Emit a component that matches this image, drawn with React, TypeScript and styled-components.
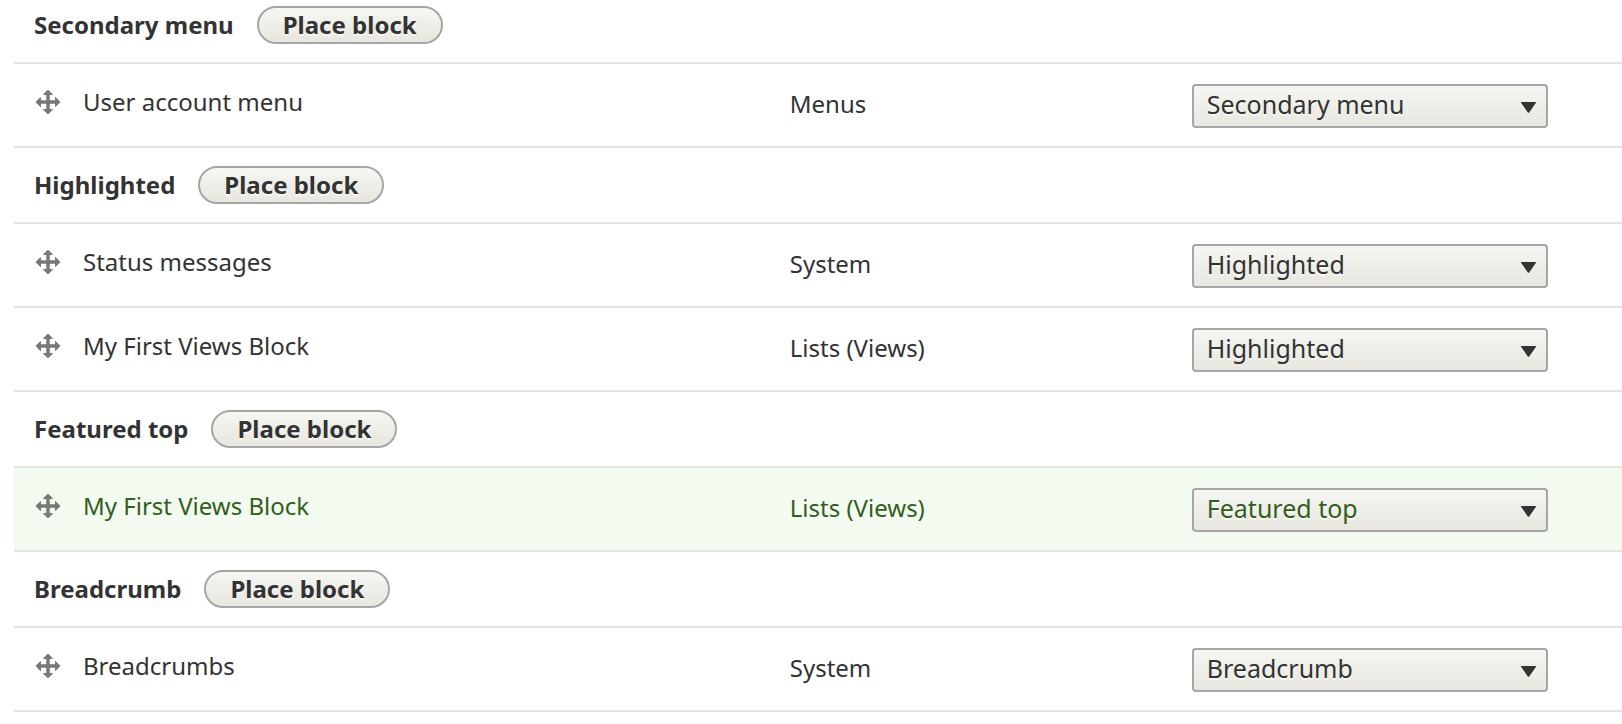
import React, { useState } from 'react';
import styled, { createGlobalStyle } from 'styled-components';

const GlobalStyle = createGlobalStyle`
  *, *::before, *::after {
    box-sizing: border-box;
  }
  body {
    margin: 0;
    background: #fff;
    color: #333;
    font-family: 'Lucida Grande', 'Lucida Sans Unicode', 'Noto Sans', 'DejaVu Sans', sans-serif;
    font-size: 24px;
    line-height: 32px;
  }
`;

const Page = styled.main`
  padding-left: 14px;
  overflow-x: hidden;
`;

const BlockTable = styled.table`
  width: 100%;
  border-collapse: separate;
  border-spacing: 0;
  table-layout: fixed;
`;

const Column = styled.col<{ $width?: string }>`
  width: ${({ $width }) => $width ?? 'auto'};
`;

const RegionCell = styled.th`
  padding: 18px 20px;
  border-bottom: 2px solid #e6e4df;
  text-align: left;
  font-weight: 700;

  tbody:first-of-type > tr > & {
    padding-top: 6px;
  }
`;

const RegionHeading = styled.div`
  display: flex;
  align-items: center;
  gap: 23px;
`;

const PlaceButton = styled.button`
  height: 38px;
  padding: 0 24px;
  border: 2px solid #a6a6a6;
  border-radius: 19px;
  background: linear-gradient(to bottom, #f6f6f3, #e7e7df);
  color: #333;
  font: inherit;
  line-height: 32px;
  text-shadow: 0 2px rgba(255, 255, 255, 0.6);
  cursor: pointer;
`;

const BlockRow = styled.tr<{ $placed?: boolean }>`
  background: ${({ $placed }) => ($placed ? '#f3faef' : 'transparent')};
  color: ${({ $placed }) => ($placed ? '#325e1c' : '#333')};
`;

const BlockCell = styled.td`
  padding: 20px 20px 18px;
  border-bottom: 2px solid #e6e4df;
  vertical-align: middle;
`;

const BlockName = styled.div`
  display: flex;
  align-items: center;
  gap: 21px;
  padding-bottom: 8px;
`;

const Category = styled.div`
  padding-bottom: 4px;
`;

const DragHandle = styled.a`
  display: block;
  height: 28px;
  cursor: move;
`;

const SelectWrap = styled.div`
  position: relative;
  max-width: 356px;
`;

const RegionSelect = styled.select`
  appearance: none;
  display: block;
  width: 100%;
  height: 44px;
  padding: 0 48px 4px 13px;
  border: 2px solid #a6a6a6;
  border-radius: 4px;
  background: linear-gradient(to bottom, #f6f6f3, #e7e7df);
  color: inherit;
  font: inherit;
  font-size: 25px;
  text-shadow: 0 2px rgba(255, 255, 255, 0.6);
`;

const Arrow = styled.svg`
  position: absolute;
  top: 18px;
  right: 12px;
  pointer-events: none;
`;

const MoveIcon = () => (
  <svg width="28" height="28" viewBox="0 0 16 16" fill="#787878" aria-hidden="true">
    <path d="M14.904 7.753l-2.373-2.372c-.291-.292-.529-.193-.529.22v1.399h-3v-3h1.398c.414 0 .512-.239.221-.53l-2.371-2.372c-.137-.136-.36-.136-.497 0l-2.372 2.372c-.292.292-.193.53.22.53h1.399v3h-3v-1.369c0-.413-.239-.511-.53-.22l-2.372 2.372c-.136.136-.136.359 0 .494l2.372 2.372c.291.292.53.193.53-.221v-1.428h3v3h-1.4c-.413 0-.511.238-.22.529l2.374 2.373c.137.137.36.137.495 0l2.373-2.373c.29-.291.19-.529-.222-.529h-1.398v-3h3v1.4c0 .412.238.511.529.219l2.373-2.371c.137-.137.137-.359 0-.496z" />
  </svg>
);

interface Block {
  name: string;
  category: string;
  placed?: boolean;
}

interface Region {
  title: string;
  blocks: Block[];
}

const regions: Region[] = [
  { title: 'Secondary menu', blocks: [{ name: 'User account menu', category: 'Menus' }] },
  {
    title: 'Highlighted',
    blocks: [
      { name: 'Status messages', category: 'System' },
      { name: 'My First Views Block', category: 'Lists (Views)' },
    ],
  },
  {
    title: 'Featured top',
    blocks: [{ name: 'My First Views Block', category: 'Lists (Views)', placed: true }],
  },
  { title: 'Breadcrumb', blocks: [{ name: 'Breadcrumbs', category: 'System' }] },
];

function RegionPicker({ block, initial }: { block: string; initial: string }) {
  const [value, setValue] = useState(initial);
  return (
    <SelectWrap>
      <RegionSelect
        aria-label={`Region for ${block} block`}
        value={value}
        onChange={(event) => setValue(event.target.value)}
      >
        {regions.map(({ title }) => (
          <option key={title}>{title}</option>
        ))}
      </RegionSelect>
      <Arrow width="15" height="11" viewBox="0 0 15 11" aria-hidden="true">
        <path d="M.6 0h13.8c.6 0 .8.5.4 1L8.2 10.4c-.4.5-1 .5-1.4 0L.2 1C-.2.5 0 0 .6 0z" fill="#333" />
      </Arrow>
    </SelectWrap>
  );
}

export default function App() {
  return (
    <Page>
      <GlobalStyle />
      <BlockTable>
        <colgroup>
          <Column $width="47%" />
          <Column $width="25%" />
          <Column />
        </colgroup>
        {regions.map(({ title, blocks }) => (
          <tbody key={title}>
            <tr>
              <RegionCell colSpan={3} scope="rowgroup">
                <RegionHeading>
                  <span>{title}</span>
                  <PlaceButton type="button">Place block</PlaceButton>
                </RegionHeading>
              </RegionCell>
            </tr>
            {blocks.map(({ name, category, placed }) => (
              <BlockRow key={name} $placed={placed}>
                <BlockCell>
                  <BlockName>
                    <DragHandle href="#" aria-label="Drag to re-order">
                      <MoveIcon />
                    </DragHandle>
                    <span>{name}</span>
                  </BlockName>
                </BlockCell>
                <BlockCell>
                  <Category>{category}</Category>
                </BlockCell>
                <BlockCell>
                  <RegionPicker block={name} initial={title} />
                </BlockCell>
              </BlockRow>
            ))}
          </tbody>
        ))}
      </BlockTable>
    </Page>
  );
}
